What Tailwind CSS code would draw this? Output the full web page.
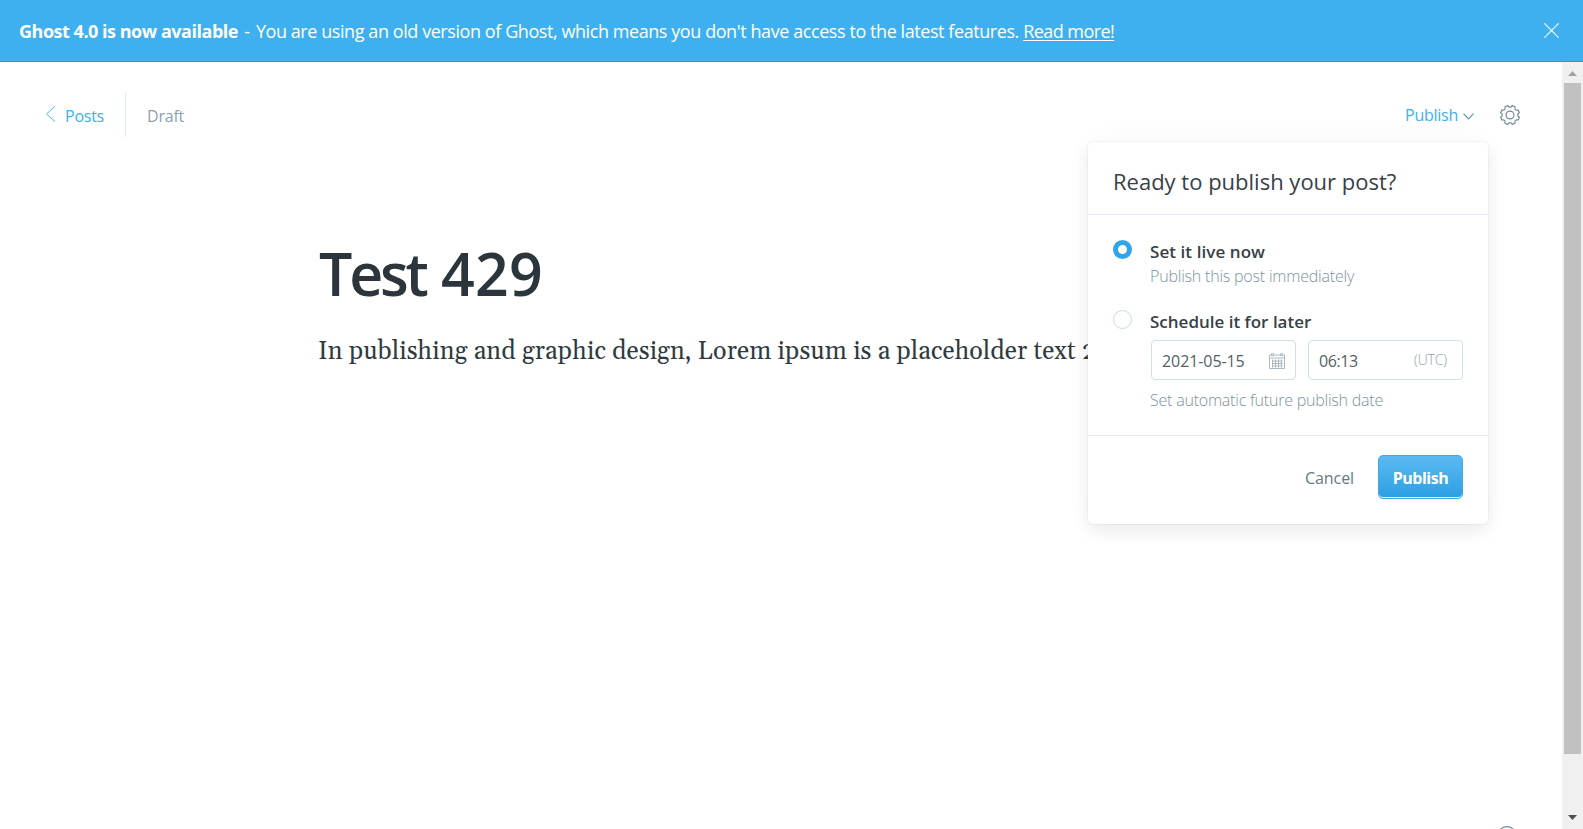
<!DOCTYPE html>
<html lang="en">
<head>
<meta charset="utf-8">
<title>Ghost editor</title>
<script src="https://cdn.jsdelivr.net/npm/@tailwindcss/browser@4"></script>
</head>
<body class="flex h-[829px] flex-col overflow-hidden bg-white font-['Open_Sans','Noto_Sans',sans-serif] text-[#394047]">
  <aside class="flex h-[62px] shrink-0 items-center justify-between border-b border-[#1f9ae2] bg-[#3eb0ef] pr-6 pl-[19px] text-[18px] leading-[61px] text-white">
    <p class="pt-0.5 whitespace-nowrap tracking-[-0.425px]"><b class="tracking-[-0.476px]">Ghost 4.0 is now available</b><span class="mx-0.5"> - </span>You are using an old version of Ghost, which means you don't have access to the latest features. <a class="tracking-[-0.56px] underline underline-offset-2">Read more!</a></p>
    <svg class="size-[15px]" viewBox="0 0 15 15" fill="none" stroke="currentColor" stroke-width="1.1"><path d="M.4.4l14.2 14.2M14.6.4L.4 14.6"/></svg>
  </aside>

  <div class="flex min-h-0 flex-1">
    <main class="relative flex-1">
      <header class="flex h-[105px] items-center justify-between pr-[41px] pl-[45px] text-[16px] leading-6">
        <div class="flex h-[45px] items-center">
          <a class="flex items-center tracking-[-0.24px] text-[#3eb0ef]">
            <svg class="mr-[10px] h-[16px] w-[15px] -translate-y-px" viewBox="0 0 15 16" fill="none" stroke="currentColor" stroke-width=".9"><path d="M10 .3L1.500 8l8.500 7.700"/></svg>
            <span class="mt-0.5 -ml-[5px]">Posts</span>
          </a>
          <span class="ml-[21px] h-full w-px bg-[#dfecf5]"></span>
          <span class="mt-0.5 ml-[21px] tracking-[-0.22px] text-[#8fa1ad]">Draft</span>
        </div>
        <div class="flex items-center pt-px">
          <a class="flex items-center gap-[5px] tracking-[-0.25px] text-[#3eb0ef]">Publish
            <svg class="mt-0.5 h-[7px] w-[11px]" viewBox="0 0 11 7" fill="none" stroke="#5d93b3" stroke-width="1.1"><path d="M.5.6l5 5.3 5-5.3"/></svg>
          </a>
          <svg class="ml-[25px] size-[22px]" viewBox="-11 -11 22 22" fill="none" stroke="#738a94" stroke-width="1.2" stroke-linejoin="round"><circle r="3.9"/><path d="M9.33 2.24L8.19 5.02Q4.24 4.24 5.02 8.19L2.24 9.33Q0 6-2.24 9.33L-5.02 8.19Q-4.24 4.24-8.19 5.02L-9.33 2.24Q-6 0-9.33-2.24L-8.19-5.02Q-4.24-4.24-5.02-8.19L-2.24-9.33Q0-6 2.24-9.33L5.02-8.19Q4.24-4.24 8.19-5.02L9.33-2.24Q6 0 9.33 2.24Z"/></svg>
        </div>
      </header>

      <article class="pt-[70px] pl-[319px]">
        <h1 class="text-[59px] leading-[72px] font-semibold tracking-[0.2px] text-[#2b353b]"><span class="tracking-[-3.2px]">Test</span> 429</h1>
        <p class="-ml-px mt-[23px] text-[25px] leading-10 tracking-[0.125px] whitespace-nowrap text-[#313b3f] font-['Gelasio','Liberation_Serif',serif]">In publishing and graphic design, Lorem ipsum is a placeholder text 2</p>
      </article>

      <section class="absolute top-20 left-[1088px] flex h-[382px] w-[400px] flex-col rounded-[5px] bg-white shadow-[0_0_0_1px_rgba(99,114,130,0.06),0_8px_16px_rgba(27,39,51,0.07),0_0_30px_rgba(27,39,51,0.03)]">
        <h2 class="h-[73px] border-b border-[#e3ecf3] pt-[23px] pl-[25px] text-[22px] leading-8">Ready to publish your post?</h2>
        <div class="flex h-[221px] flex-col border-b border-[#e3ecf3] pr-[25px] pl-[25px]">
          <div class="flex pt-[25px]">
            <span class="size-[19px] shrink-0 rounded-full border-[5px] border-[#30a5e9] bg-white"></span>
            <div class="-mt-px ml-[18px]">
              <h3 class="text-[17px] leading-[26px] font-semibold tracking-[0.07px]">Set it live now</h3>
              <p class="-mt-px text-[16px] leading-6 font-light tracking-[-0.2px] text-[#7d929e]">Publish this post immediately</p>
            </div>
          </div>
          <div class="flex pt-[22px]">
            <span class="size-[19px] shrink-0 rounded-full border border-[#c5dcea] bg-white"></span>
            <div class="-mt-px ml-[18px] flex-1">
              <h3 class="text-[17px] leading-[26px] font-semibold">Schedule it for later</h3>
              <div class="mt-[5px] ml-px flex gap-3 text-[16px] leading-[38px] text-[#525f68]">
                <div class="flex h-10 w-[145px] items-center justify-between rounded-[4px] border border-[#cfdfea] pr-[10px] pl-[10px] pt-0.5">
                  <span class="tracking-[-0.08px]">2021-05-15</span>
                  <svg class="size-4" viewBox="0 0 16 16" fill="none" stroke="#a3b1b9" stroke-width=".9"><path d="M.5 2h15v13.5H.5zM.5 5h15M3 8h10.5M3 10.5h10.5M3 13h10.5M3.500 6.500v8M6.500 6.500v8M9.500 6.500v8M12.500 6.500v8"/><path fill="#fff" d="M2.500.7h2v2h-2zM11.500.7h2v2h-2z"/></svg>
                </div>
                <div class="flex h-10 w-[155px] items-center justify-between rounded-[4px] border border-[#cfdfea] pr-[15px] pl-[10px] pt-0.5">
                  <span class="tracking-[-0.4px]">06:13</span>
                  <span class="-mt-0.5 text-[14px] font-light tracking-[-0.15px] text-[#8fa1ad]">(UTC)</span>
                </div>
              </div>
              <p class="mt-2 text-[16px] leading-6 font-light tracking-[-0.217px] text-[#7d929e]">Set automatic future publish date</p>
            </div>
          </div>
        </div>
        <footer class="flex items-center justify-end pt-[19px] pr-[25px] text-[16px]">
          <button class="pt-px tracking-[-0.08px] text-[#667985]">Cancel</button>
          <button class="ml-6 h-11 w-[85px] rounded-[5px] border border-[#3eaae6] bg-linear-to-b from-[#5bbaf1] to-[#299fe3] pt-px font-bold tracking-[-0.5px] text-white shadow-[inset_0_-1px_0_#fff]">Publish</button>
        </footer>
      </section>

      <svg class="absolute top-[764px] left-[1497px] size-5" viewBox="0 0 20 20" fill="none" stroke="#738a94" stroke-width="1.2"><circle cx="10" cy="10" r="9.400"/></svg>
    </main>

    <div class="flex w-[21px] shrink-0 flex-col items-center bg-[#f0f0f0]">
      <svg class="mt-[9px] h-[5px] w-[9px]" viewBox="0 0 9 5" fill="#a3a3a3"><path d="M0 5L4.500 0 9 5z"/></svg>
      <span class="mt-[7px] h-[671px] w-[17px] bg-[#c1c1c1]"></span>
      <svg class="mt-[61px] h-[5px] w-[9px]" viewBox="0 0 9 5" fill="#505050"><path d="M0 0l4.500 5L9 0z"/></svg>
    </div>
  </div>
</body>
</html>
